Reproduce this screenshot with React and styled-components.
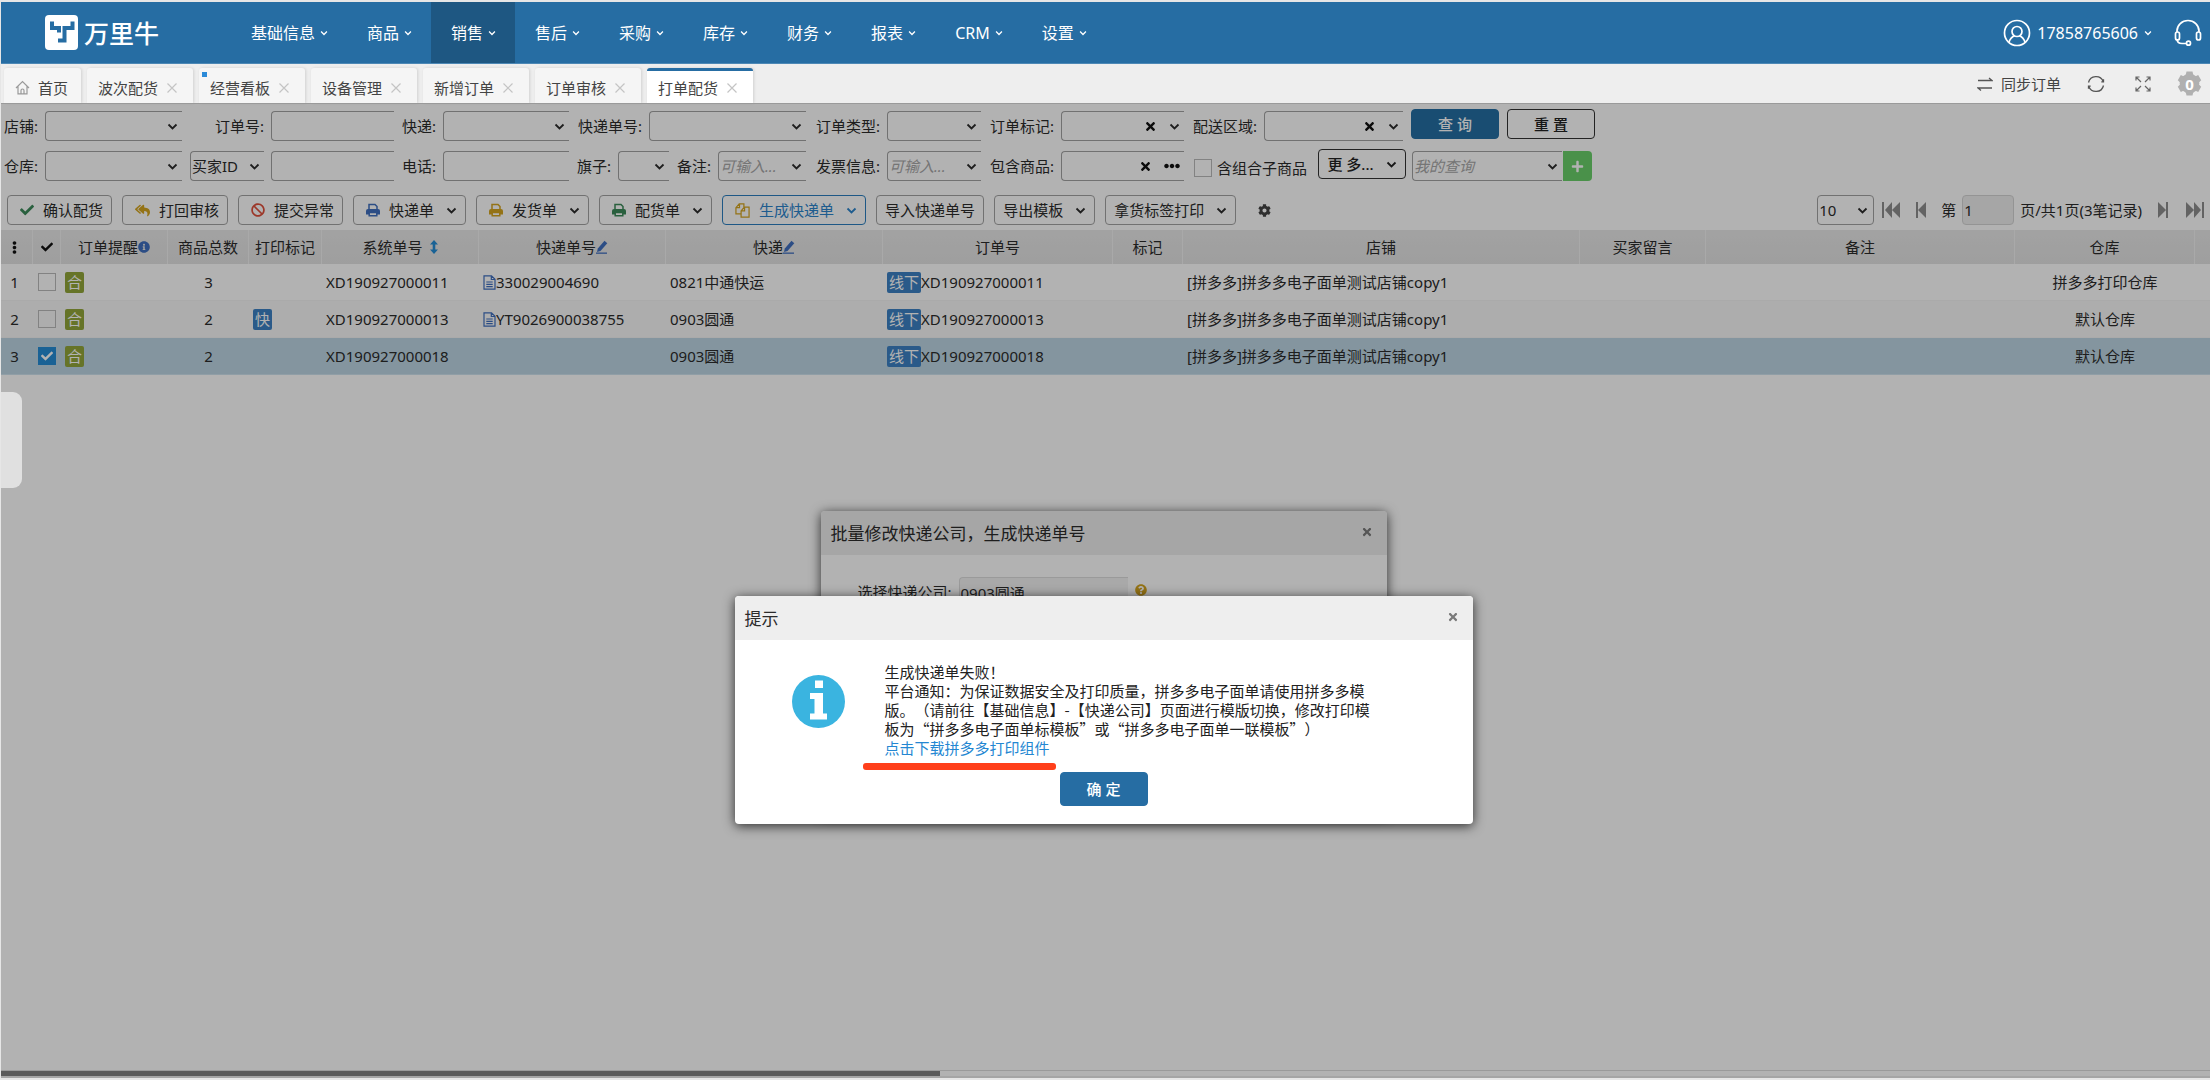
import styled, { createGlobalStyle, css } from "styled-components";
import {
  FaBan,
  FaCheck,
  FaCog,
  FaEllipsisH,
  FaEllipsisV,
  FaInfoCircle,
  FaPlus,
  FaQuestionCircle,
  FaReplyAll,
  FaTimes,
} from "react-icons/fa";

const latinFirst = `"Noto Sans", "Noto Sans CJK SC", sans-serif`;
const cjkFirst = `"Noto Sans CJK SC", "Noto Sans", sans-serif`;

const GlobalStyle = createGlobalStyle`
  * {
    box-sizing: border-box;
  }

  body {
    margin: 0;
    font-family: ${latinFirst};
    font-size: 15px;
    line-height: 20px;
    color: #2b2b2b;
    background: #fff;
  }

  button, input, select {
    margin: 0;
    font: inherit;
    color: inherit;
  }

  button {
    cursor: pointer;
  }

  svg {
    display: block;
    flex: none;
  }
`;

/* ---------- icons ---------- */

const Chevron = ({ size = 11 }) => (
  <svg width={size} height={size} viewBox="0 0 11 11" fill="none" stroke="currentColor" strokeWidth="1.800">
    <path d="M1.500 3.500 5.500 7.500 9.500 3.500" />
  </svg>
);

const ThinCross = () => (
  <svg width="10" height="10" viewBox="0 0 10 10" fill="none" stroke="#c4c4c4" strokeWidth="1.200">
    <path d="M.5.5 9.500 9.500M9.500.5.5 9.500" />
  </svg>
);

const LogoMark = () => (
  <svg width="33" height="35" viewBox="0 0 33 35">
    <rect width="33" height="35" rx="4" fill="#fff" />
    <path
      d="M7 6.500V13H14V17.500M27.500 6.500V13H19.500V25.500H13"
      fill="none"
      stroke="#266da3"
      strokeWidth="4"
    />
  </svg>
);

const HomeIcon = () => (
  <svg width="15" height="15" viewBox="0 0 15 15" fill="none" stroke="#9a9a9a" strokeWidth="1.200">
    <path d="M1 8 7.500 1.500 14 8M3 6.500V13.800H12V6.500M6 13.800V10.500a1.500 1.500 0 0 1 3 0V13.800" />
  </svg>
);

const UserIcon = () => (
  <svg width="28" height="28" viewBox="0 0 28 28" fill="none" stroke="#fff" strokeWidth="1.700">
    <circle cx="14" cy="14" r="12.500" />
    <circle cx="14" cy="12.500" r="5" />
    <path d="M6 23c1.200-3.500 3-5.300 5.500-6.300M22 23c-1.200-3.500-3-5.300-5.500-6.300" />
  </svg>
);

const HeadsetIcon = () => (
  <svg width="28" height="28" viewBox="0 0 28 28" fill="none" stroke="#fff" strokeWidth="1.700">
    <path d="M3 13V12a11 10.500 0 0 1 22 0v1" />
    <rect x="1.500" y="13" width="4" height="8" rx="2" />
    <rect x="22.500" y="13" width="4" height="8" rx="2" />
    <path d="M3 20c0 3 2 4.500 5 4.500h4.500" />
    <circle cx="14.500" cy="24.200" r="2" />
  </svg>
);

const SyncIcon = () => (
  <svg width="16" height="14" viewBox="0 0 16 14" fill="none" stroke="#555" strokeWidth="1.300">
    <path d="M1 3.500H15L12 1M15 11H1L4 13.500" />
  </svg>
);

const RefreshIcon = () => (
  <svg width="18" height="18" viewBox="0 0 18 18" fill="none" stroke="#555" strokeWidth="1.300">
    <path d="M1.500 7.500A7.700 7.700 0 0 1 16.200 6.500M16.500 10.500A7.700 7.700 0 0 1 1.800 11.500M16.500 4.200v2.600h-2.200M1.500 13.800v-2.600h2.200" />
  </svg>
);

const ExpandIcon = () => (
  <svg width="16" height="16" viewBox="0 0 16 16" fill="none" stroke="#666" strokeWidth="1.200">
    <path d="M1 4.500V1H4.500M1 1 6 6M11.500 1H15V4.500M15 1 10 6M1 11.500V15H4.500M1 15 6 10M11.500 15H15V11.500M15 15 10 10" />
  </svg>
);

const PrintIcon = ({ color }) => (
  <svg width="14" height="14" viewBox="0 0 14 14" fill="none">
    <path d="M3 6V1.500H9L11 3.500V6" stroke={color} strokeWidth="1.500" />
    <path d="M0 8a2 2 0 0 1 2-2H12a2 2 0 0 1 2 2V11.500H0Z" fill={color} />
    <path d="M3.200 9.500H10.800V12.800H3.200Z" fill="#fff" stroke={color} strokeWidth="1.500" />
  </svg>
);

const FilesIcon = () => (
  <svg width="15" height="15" viewBox="0 0 16 16" fill="none" stroke="#d5a520" strokeWidth="1.300">
    <path d="M6.500 11.500H1V5L4.500 1H9.500V4.500M4.800 1V5H1" />
    <path d="M6.500 8.500 10 4.500H15V15H6.500ZM10.200 4.500V8.500H6.500" />
  </svg>
);

const PencilIcon = () => (
  <svg width="12" height="14" viewBox="0 0 12 14" fill="#3f6fbf">
    <path d="M1 12 1.800 8.500 8.500.8 11.300 3.200 4.500 11Z" />
    <path d="M0 12.500H11V13.800H0Z" />
  </svg>
);

const SortIcon = () => (
  <svg width="8" height="14" viewBox="0 0 8 14" fill="#258dd6">
    <path d="M4 0 8 4.500H5.300V9.500H8L4 14 0 9.500H2.700V4.500H0Z" />
  </svg>
);

const DocIcon = () => (
  <svg width="13" height="15" viewBox="0 0 13 15" fill="none" stroke="#3f6fbf" strokeWidth="1.200">
    <path d="M1 .8H8.500L12 4.300V14.200H1ZM8.300.8V4.500H12M3.300 7H9.700M3.300 9.300H9.700M3.300 11.600H9.700" />
  </svg>
);

const PageFirst = () => (
  <svg width="18" height="16" viewBox="0 0 18 16" fill="currentColor">
    <path d="M0 0H2V16H0ZM10 0V16L3 8ZM18 0V16L10 8Z" />
  </svg>
);

const PagePrev = () => (
  <svg width="10" height="16" viewBox="0 0 10 16" fill="currentColor">
    <path d="M0 0H2V16H0ZM10 0V16L2 8Z" />
  </svg>
);

const PageNext = () => (
  <svg width="10" height="16" viewBox="0 0 10 16" fill="currentColor">
    <path d="M8 0H10V16H8ZM0 0V16L8 8Z" />
  </svg>
);

const PageLast = () => (
  <svg width="18" height="16" viewBox="0 0 18 16" fill="currentColor">
    <path d="M16 0H18V16H16ZM0 0V16L8 8ZM8 0V16L15 8Z" />
  </svg>
);

const InfoMark = () => (
  <svg width="53" height="53" viewBox="0 0 53 53">
    <circle cx="26.500" cy="26.500" r="26.500" fill="#3ab4e0" />
    <path d="M23 5.500H31V13H23ZM18 18H31V38.500H35V44.500H18V38.500H22.500V24H18Z" fill="#fff" />
  </svg>
);

/* ---------- shell ---------- */

const Page = styled.div`
  display: flex;
  flex-direction: column;
  min-height: 100vh;
  border: solid #e6e6e6;
  border-width: 2px 0 2px 1px;
  overflow: hidden;
`;

const Header = styled.header`
  display: flex;
  height: 62px;
  background: #266da3;
  border-bottom: 1px solid #4d88b5;
  color: #fff;
  font-size: 16px;
`;

const Logo = styled.a`
  display: flex;
  align-items: center;
  gap: 6px;
  width: 230px;
  padding-left: 44px;
  color: #fff;
  font-size: 25px;
  font-weight: 500;
  text-decoration: none;
`;

const Nav = styled.nav`
  display: flex;
`;

const NavLink = styled.a`
  display: flex;
  align-items: center;
  gap: 5px;
  padding: 0 19px 0 20px;
  color: #fff;
  text-decoration: none;
  white-space: nowrap;
  background: ${({ $active }) => ($active ? "#1e5782" : "transparent")};
`;

const Account = styled.div`
  display: flex;
  align-items: center;
  margin-left: auto;
  padding-right: 8px;
  gap: 22px;
`;

const AccountButton = styled.button`
  display: flex;
  align-items: center;
  gap: 6px;
  padding: 0;
  border: 0;
  background: none;
`;

const TabBar = styled.div`
  display: flex;
  align-items: flex-end;
  height: 39px;
  padding-left: 3px;
  background: #eee;
`;

const TabList = styled.div`
  display: flex;
  gap: 6px;
`;

const Tab = styled.div`
  position: relative;
  display: flex;
  align-items: center;
  height: 35px;
  padding: 1px ${({ $home }) => ($home ? 13 : 16)}px 0 11px;
  gap: 9px;
  border-top: 3px solid ${({ $active }) => ($active ? "#266da3" : "transparent")};
  border-radius: 3px 3px 0 0;
  background: ${({ $active }) => ($active ? "#fff" : "#f5f5f5")} border-box;
  box-shadow: 1px 0 3px rgba(0, 0, 0, 0.12);
  color: #444;
  white-space: nowrap;
`;

const TabLink = styled.button`
  display: flex;
  align-items: center;
  gap: 8px;
  padding: 0;
  border: 0;
  background: none;
`;

const TabClose = styled.button`
  padding: 0;
  border: 0;
  background: none;
`;

const TabDot = styled.span`
  position: absolute;
  top: 1px;
  left: 3px;
  width: 5px;
  height: 5px;
  background: #2b8ad8;
`;

const TabTools = styled.div`
  display: flex;
  align-items: center;
  align-self: center;
  gap: 26px;
  margin-left: auto;
  padding-right: 8px;
  color: #444;
`;

const ToolButton = styled.button`
  position: relative;
  display: flex;
  align-items: center;
  gap: 8px;
  margin-right: ${({ $after = 0 }) => $after}px;
  padding: 0;
  border: 0;
  background: none;
`;

const GearCount = styled.span`
  position: absolute;
  inset: 0;
  display: grid;
  place-items: center;
  color: #fff;
  font-weight: 700;
`;

const Gear = () => (
  <svg width="25" height="25" viewBox="0 0 25 25" fill="#b0b0b0">
    <circle cx="12.500" cy="12.500" r="9.800" />
    <path d="M9.500.5H15.500L16.500 5H8.500ZM9.500 24.500H15.500L16.500 20H8.500ZM.8 9.200 3.800 4 8 6 4 12.500ZM24.200 9.200 21.200 4 17 6 21 12.500ZM.8 15.800 3.800 21 8 19 4 12.500ZM24.200 15.800 21.200 21 17 19 21 12.500Z" />
  </svg>
);

const Workspace = styled.main`
  position: relative;
  display: flex;
  flex: 1;
  flex-direction: column;
`;

/* ---------- filters ---------- */

const Filters = styled.form`
  display: flex;
  flex-direction: column;
  gap: 10px;
  padding-top: 7px;
  border-top: 1px solid #ddd;
`;

const FilterRow = styled.div`
  display: flex;
  align-items: center;
  height: 30px;
`;

const Label = styled.label`
  width: ${({ $width }) => $width}px;
  padding-right: 7px;
  text-align: right;
  white-space: nowrap;
`;

const Control = styled.div`
  display: flex;
  align-items: center;
  width: ${({ $width }) => $width}px;
  height: 30px;
  margin-left: ${({ $indent = 0 }) => $indent}px;
  padding: 0 4px 0 1px;
  border: 1px solid #a3a3a3;
  border-right: 0;
  border-radius: 4px 0 0 4px;

  ${({ $closed }) =>
    $closed &&
    css`
      border-right: 1px solid #a3a3a3;
      border-radius: 4px;
      padding-right: 5px;
    `}
`;

const fieldStyle = css`
  flex: 1;
  min-width: 0;
  height: 28px;
  padding: 0;
  border: 0;
  outline: 0;
  background: none;
`;

const TextInput = styled.input`
  ${fieldStyle}

  &::placeholder {
    color: #a8a8a8;
    font-style: italic;
    opacity: 1;
  }
`;

const Select = styled.select`
  ${fieldStyle}
  appearance: none;
`;

const ClearIcon = styled.button`
  margin-right: 12px;
  padding: 0;
  border: 0;
  background: none;
  color: #111;
  font-size: 13px;
`;

const Field = ({ id, label, labelWidth, width, kind = "select", placeholder, more }) => (
  <>
    <Label htmlFor={id} $width={labelWidth}>{label}:</Label>
    <Control $width={width}>
      {kind === "select" ? (
        <Select id={id}>
          <option></option>
        </Select>
      ) : (
        <TextInput id={id} type="text" placeholder={placeholder} />
      )}
      {kind === "clear" && (
        <ClearIcon type="button" aria-label="清除">
          <FaTimes />
        </ClearIcon>
      )}
      {more && <FaEllipsisH size={16} color="#111" />}
      {kind !== "text" && !more && <Chevron />}
    </Control>
  </>
);

const Button = styled.button`
  display: flex;
  align-items: center;
  justify-content: center;
  width: 88px;
  height: 30px;
  margin-left: 8px;
  padding: 0 8px;
  border: 1px solid ${({ $primary }) => ($primary ? "#246fa4" : "#333")};
  border-radius: 4px;
  background: ${({ $primary }) => ($primary ? "#246fa4" : "transparent")};
  color: ${({ $primary }) => ($primary ? "#fff" : "#222")};
  font-weight: 500;
  white-space: nowrap;
`;

const RaisedRow = styled.div`
  display: flex;
  align-self: flex-start;
  margin-top: -2px;
`;

const CheckLabel = styled.label`
  display: flex;
  align-items: center;
  gap: 5px;
  padding: 4px 3px 0 10px;
  white-space: nowrap;
`;

const Checkbox = styled.input`
  display: block;
  flex: none;
  appearance: none;
  width: 18px;
  height: 18px;
  margin: 0;
  border: 1px solid #bbb;

  &:checked {
    border-color: #258dd6;
    background: #258dd6;
  }
`;

const AddButton = styled.button`
  display: grid;
  place-items: center;
  width: 29px;
  height: 30px;
  margin-left: 1px;
  padding: 0;
  border: 0;
  border-radius: 0 4px 4px 0;
  background: #6bd06b;
  color: #fff;
`;

/* ---------- toolbar ---------- */

const Toolbar = styled.div`
  display: flex;
  align-items: center;
  gap: 10px;
  padding: 14px 6px 5px;
`;

const ActionButton = styled.button`
  display: flex;
  align-items: center;
  height: 30px;
  padding: 0 8px;
  border: 1px solid #a3a3a3;
  border-radius: 4px;
  background: none;
  white-space: nowrap;

  ${({ $highlight }) =>
    $highlight &&
    css`
      border-color: #2b7fc0;
      color: #2b84cc;
    `}
`;

const ActionIcon = styled.span`
  margin: 0 9px 0 4px;
`;

const ActionChevron = styled.span`
  margin-left: 12px;
`;

const GearButton = styled.button`
  margin-left: 12px;
  padding: 0;
  border: 0;
  background: none;
  color: #444;
`;

const Pager = styled.div`
  display: flex;
  align-items: center;
  gap: 6px;
  margin-left: auto;
  white-space: nowrap;
`;

const PagerButton = styled.button`
  margin-right: ${({ $after = 0 }) => $after}px;
  margin-left: ${({ $before = 0 }) => $before}px;
  padding: 0;
  border: 0;
  background: none;
  color: #8f8f8f;
`;

const PageNumber = styled.input`
  width: 52px;
  height: 30px;
  padding: 0 1px;
  border: 1px solid #d5d5d5;
  border-radius: 4px;
  background: #eee;
`;

/* ---------- grid ---------- */

const Table = styled.table`
  width: 100%;
  table-layout: fixed;
  border-collapse: separate;
  border-spacing: 0;
  white-space: nowrap;
`;

const Th = styled.th`
  height: 34px;
  padding: 0;
  border-right: 1px solid #f2f2f2;
  background: linear-gradient(#e9e9e9, #e3e3e3);
  font-weight: 400;

  &:first-child {
    padding-right: 4px;
  }

  &:last-child {
    border-right: 0;
  }
`;

const HeadContent = styled.span`
  display: flex;
  align-items: center;
  justify-content: center;
  gap: ${({ $gap = 0 }) => $gap}px;
`;

const Row = styled.tr`
  background: ${({ $odd, $selected }) => ($selected ? "#bdd6e4" : $odd ? "#f8f8f8" : "#fff")};

  td {
    border-bottom-color: ${({ $selected }) => ($selected ? "#cfe3ee" : "#f4f4f4")};
  }
`;

const Td = styled.td`
  height: 37px;
  padding: 0 4px;
  border-bottom: 1px solid;
  text-align: ${({ $center }) => ($center ? "center" : "left")};

  &:first-child {
    padding: 0 5px 0 0;
  }
`;

const CellContent = styled.span`
  display: flex;
  align-items: center;
`;

const CheckCell = styled.label`
  position: relative;
  display: grid;
  width: 18px;
  height: 18px;
  margin: 0 auto;

  svg {
    position: absolute;
    inset: 3px;
    color: #fff;
    pointer-events: none;
  }
`;

const Badge = styled.span`
  padding: 0 2px;
  border-radius: 2px;
  background: ${({ $color }) => $color};
  color: #fff;
  line-height: 21px;
`;

const ScrollTrack = styled.div`
  margin-top: auto;
  border-top: 1px solid #ddd;
  border-bottom: 2px solid #ececec;
`;

const ScrollThumb = styled.div`
  width: 42.5%;
  height: 5px;
  background: #828282;
`;

/* ---------- dialogs ---------- */

const Shade = styled.div`
  position: absolute;
  inset: 0;
  background: rgba(0, 0, 0, 0.3);
`;

const DialogLayer = styled.div`
  position: absolute;
  inset: 0;
  display: flex;
  align-items: flex-start;
  justify-content: center;
  padding: ${({ $top }) => $top}px 4px 0 0;
`;

const Dialog = styled.section`
  width: ${({ $width }) => $width}px;
  border-radius: 4px;
  background: #fff;
  box-shadow: 0 2px 12px rgba(0, 0, 0, 0.75);
`;

const DialogHead = styled.div`
  display: flex;
  align-items: center;
  justify-content: space-between;
  height: 44px;
  padding: 0 14px 0 10px;
  border-radius: 4px 4px 0 0;
  background: #eee;
  font-family: ${cjkFirst};

  h2 {
    margin: 0;
    font-size: 17px;
    font-weight: 400;
  }
`;

const DialogClose = styled.button`
  padding: 0 0 2px;
  border: 0;
  background: none;
  color: #7a7a7a;
  font-size: 12px;
`;

const CourierRow = styled.div`
  display: flex;
  align-items: flex-start;
  min-height: 260px;
  padding: 22px 38px 0 31px;

  ${Label} {
    line-height: 30px;
  }

  ${Control} {
    background: #f3f3f3;
    border-color: #ddd;
    margin-right: 7px;
  }

  > svg {
    margin-top: 7px;
  }
`;

const MessageBody = styled.div`
  display: flex;
  gap: 40px;
  padding: 22px 100px 0 57px;
  color: #222;

  > svg {
    margin-top: 13px;
  }
`;

const Message = styled.div`
  font-family: ${cjkFirst};
  line-height: 19px;
  text-spacing-trim: space-all;

  p {
    margin: 0;
  }
`;

const DownloadLink = styled.a`
  position: relative;
  color: #2487d2;
  text-decoration: none;

  &::after {
    content: "";
    position: absolute;
    top: 26px;
    right: -6px;
    left: -22px;
    height: 7px;
    border-radius: 3px;
    background: #ff3f1b;
  }
`;

const DialogFoot = styled.div`
  display: flex;
  justify-content: center;
  padding: 15px 0 18px;

  ${Button} {
    height: 34px;
    margin: 0;
    border-color: #266da3;
    background: #266da3;
  }
`;

const SideHandle = styled.button`
  position: absolute;
  top: 289px;
  left: 0;
  width: 21px;
  height: 96px;
  padding: 0;
  border: 0;
  border-radius: 0 9px 9px 0;
  background: #e0e0e0;
`;

/* ---------- data ---------- */

const menus = ["基础信息", "商品", "销售", "售后", "采购", "库存", "财务", "报表", "CRM", "设置"];

const tabs = ["波次配货", "经营看板", "设备管理", "新增订单", "订单审核", "打单配货"];

const actions = [
  { text: "确认配货", icon: <FaCheck size={14} color="#3c8a5a" /> },
  { text: "打回审核", icon: <FaReplyAll size={15} color="#d5a520" /> },
  { text: "提交异常", icon: <FaBan size={14} color="#e0503c" /> },
  { text: "快递单", icon: <PrintIcon color="#3f6fbf" />, menu: true },
  { text: "发货单", icon: <PrintIcon color="#d5a520" />, menu: true },
  { text: "配货单", icon: <PrintIcon color="#3c8a5a" />, menu: true },
  { text: "生成快递单", icon: <FilesIcon />, menu: true, highlight: true },
  { text: "导入快递单号" },
  { text: "导出模板", menu: true },
  { text: "拿货标签打印", menu: true },
];

const columns = [
  { width: 32, content: <FaEllipsisV size={13} color="#111" /> },
  { width: 28, content: <FaCheck size={12} color="#111" /> },
  { width: 107, content: <>订单提醒<FaInfoCircle size={12} color="#3f6fbf" /></> },
  { width: 81, content: "商品总数" },
  { width: 73, content: "打印标记" },
  { width: 157, gap: 7, content: <>系统单号<SortIcon /></> },
  { width: 187, content: <>快递单号<PencilIcon /></> },
  { width: 217, content: <>快递<PencilIcon /></> },
  { width: 230, content: "订单号" },
  { width: 70, content: "标记" },
  { width: 397, content: "店铺" },
  { width: 126, content: "买家留言" },
  { width: 309, content: "备注" },
  { width: 180, content: "仓库" },
  { content: "" },
];

const shop = "[拼多多]拼多多电子面单测试店铺copy1";

const orders = [
  { id: 1, count: 3, code: "XD190927000011", track: "330029004690", courier: "0821中通快运", store: "拼多多打印仓库" },
  { id: 2, count: 2, mark: "快", code: "XD190927000013", track: "YT9026900038755", courier: "0903圆通", store: "默认仓库" },
  { id: 3, count: 2, code: "XD190927000018", courier: "0903圆通", store: "默认仓库", selected: true },
];

const TopBar = () => (
  <Header>
    <Logo href="#">
      <LogoMark />
      万里牛
    </Logo>
    <Nav>
      {menus.map((name) => (
        <NavLink href="#" key={name} $active={name === "销售"}>
          {name}
          <Chevron size={8} />
        </NavLink>
      ))}
    </Nav>
    <Account>
      <AccountButton>
        <UserIcon />
        17858765606
        <Chevron size={8} />
      </AccountButton>
      <AccountButton aria-label="客服">
        <HeadsetIcon />
      </AccountButton>
    </Account>
  </Header>
);

const Tabs = () => (
  <TabBar>
    <TabList>
      <Tab $home>
        <TabLink>
          <HomeIcon />
          首页
        </TabLink>
      </Tab>
      {tabs.map((name) => (
        <Tab key={name} $active={name === "打单配货"}>
          {name === "经营看板" && <TabDot />}
          <TabLink>{name}</TabLink>
          <TabClose aria-label="关闭">
            <ThinCross />
          </TabClose>
        </Tab>
      ))}
    </TabList>
    <TabTools>
      <ToolButton>
        <SyncIcon />
        同步订单
      </ToolButton>
      <ToolButton aria-label="刷新" $after={4}>
        <RefreshIcon />
      </ToolButton>
      <ToolButton aria-label="全屏">
        <ExpandIcon />
      </ToolButton>
      <ToolButton>
        <Gear />
        <GearCount>0</GearCount>
      </ToolButton>
    </TabTools>
  </TabBar>
);

const FilterForm = () => (
  <Filters>
    <FilterRow>
      <Field id="shop" label="店铺" labelWidth={44} width={137} />
      <Field id="order-no" label="订单号" labelWidth={89} width={123} kind="text" />
      <Field id="courier" label="快递" labelWidth={49} width={126} />
      <Field id="track-no" label="快递单号" labelWidth={80} width={157} />
      <Field id="order-type" label="订单类型" labelWidth={81} width={94} />
      <Field id="order-mark" label="订单标记" labelWidth={80} width={123} kind="clear" />
      <Field id="area" label="配送区域" labelWidth={80} width={139} kind="clear" />
      <RaisedRow>
        <Button type="button" $primary>查 询</Button>
        <Button type="button">重 置</Button>
      </RaisedRow>
    </FilterRow>
    <FilterRow>
      <Field id="warehouse" label="仓库" labelWidth={44} width={137} />
      <Control $width={74} $indent={8}>
        <Select aria-label="买家ID">
          <option>买家ID</option>
        </Select>
        <Chevron />
      </Control>
      <Control $width={123} $indent={7}>
        <TextInput type="text" aria-label="买家ID内容" />
      </Control>
      <Field id="phone" label="电话" labelWidth={49} width={126} kind="text" />
      <Field id="flag" label="旗子" labelWidth={49} width={51} />
      <Field id="remark" label="备注" labelWidth={49} width={88} kind="combo" placeholder="可输入..." />
      <Field id="invoice" label="发票信息" labelWidth={81} width={94} kind="combo" placeholder="可输入..." />
      <Field id="goods" label="包含商品" labelWidth={80} width={123} kind="clear" more />
      <CheckLabel>
        <Checkbox type="checkbox" />
        含组合子商品
      </CheckLabel>
      <RaisedRow>
        <Button type="button">
          更 多...
          <ActionChevron>
            <Chevron />
          </ActionChevron>
        </Button>
      </RaisedRow>
      <Control $width={150} $indent={6}>
        <TextInput type="text" placeholder="我的查询" aria-label="我的查询" />
        <Chevron />
      </Control>
      <AddButton type="button" aria-label="添加">
        <FaPlus size={13} />
      </AddButton>
    </FilterRow>
  </Filters>
);

const ActionBar = () => (
  <Toolbar>
    {actions.map(({ text, icon, menu, highlight }) => (
      <ActionButton key={text} $highlight={highlight}>
        {icon && <ActionIcon>{icon}</ActionIcon>}
        {text}
        {menu && (
          <ActionChevron>
            <Chevron />
          </ActionChevron>
        )}
      </ActionButton>
    ))}
    <GearButton aria-label="设置">
      <FaCog size={13} />
    </GearButton>
    <Pager>
      <Control $width={57} $closed>
        <Select aria-label="每页条数">
          <option>10</option>
        </Select>
        <Chevron />
      </Control>
      <PagerButton aria-label="首页" $before={2} $after={10}>
        <PageFirst />
      </PagerButton>
      <PagerButton aria-label="上一页" $after={9}>
        <PagePrev />
      </PagerButton>
      <label htmlFor="page-no">第</label>
      <PageNumber id="page-no" defaultValue="1" />
      页/共1页(3笔记录)
      <PagerButton aria-label="下一页" $before={10}>
        <PageNext />
      </PagerButton>
      <PagerButton aria-label="末页" $before={12}>
        <PageLast />
      </PagerButton>
    </Pager>
  </Toolbar>
);

const OrderTable = () => (
  <Table>
    <colgroup>
      {columns.map(({ width }, i) => (
        <col key={i} width={width} />
      ))}
    </colgroup>
    <thead>
      <tr>
        {columns.map(({ content, gap }, i) => (
          <Th key={i}>
            <HeadContent $gap={gap}>{content}</HeadContent>
          </Th>
        ))}
      </tr>
    </thead>
    <tbody>
      {orders.map((order, i) => (
        <Row key={order.id} $odd={i % 2 === 1} $selected={order.selected}>
          <Td $center>{order.id}</Td>
          <Td>
            <CheckCell>
              <Checkbox type="checkbox" defaultChecked={order.selected} aria-label={order.code} />
              {order.selected && <FaCheck size={12} />}
            </CheckCell>
          </Td>
          <Td>
            <CellContent>
              <Badge $color="#93a63a">合</Badge>
            </CellContent>
          </Td>
          <Td $center>{order.count}</Td>
          <Td>
            <CellContent>{order.mark && <Badge $color="#3d82c4">{order.mark}</Badge>}</CellContent>
          </Td>
          <Td>{order.code}</Td>
          <Td>
            {order.track && (
              <CellContent>
                <DocIcon />
                {order.track}
              </CellContent>
            )}
          </Td>
          <Td>{order.courier}</Td>
          <Td>
            <CellContent>
              <Badge $color="#3d82c4">线下</Badge>
              {order.code}
            </CellContent>
          </Td>
          <Td />
          <Td>{shop}</Td>
          <Td />
          <Td />
          <Td $center>{order.store}</Td>
          <Td />
        </Row>
      ))}
    </tbody>
  </Table>
);

const CourierDialog = () => (
  <DialogLayer $top={408}>
    <Dialog $width={566}>
      <DialogHead>
        <h2>批量修改快递公司，生成快递单号</h2>
        <DialogClose aria-label="关闭">
          <FaTimes />
        </DialogClose>
      </DialogHead>
      <CourierRow>
        <Label htmlFor="company" $width={107}>选择快递公司:</Label>
        <Control $width={169}>
          <TextInput id="company" type="text" defaultValue="0903圆通" />
        </Control>
        <FaQuestionCircle size={12} color="#d5a520" />
      </CourierRow>
    </Dialog>
  </DialogLayer>
);

const FailureDialog = () => (
  <DialogLayer $top={493}>
    <Dialog $width={738} role="alertdialog">
      <DialogHead>
        <h2>提示</h2>
        <DialogClose aria-label="关闭">
          <FaTimes />
        </DialogClose>
      </DialogHead>
      <MessageBody>
        <InfoMark />
        <Message lang="zh-CN">
          <p>生成快递单失败！</p>
          <p>
            平台通知：为保证数据安全及打印质量，拼多多电子面单请使用拼多多模版。（请前往【基础信息】-【快递公司】页面进行模版切换，修改打印模板为“拼多多电子面单标模板”或“拼多多电子面单一联模板”）
          </p>
          <DownloadLink href="#">点击下载拼多多打印组件</DownloadLink>
        </Message>
      </MessageBody>
      <DialogFoot>
        <Button $primary>确 定</Button>
      </DialogFoot>
    </Dialog>
  </DialogLayer>
);

const App = () => (
  <Page>
    <GlobalStyle />
    <TopBar />
    <Tabs />
    <Workspace>
      <FilterForm />
      <ActionBar />
      <OrderTable />
      <ScrollTrack>
        <ScrollThumb />
      </ScrollTrack>
      <CourierDialog />
      <Shade />
      <FailureDialog />
      <SideHandle aria-label="展开" />
    </Workspace>
  </Page>
);

export default App;
